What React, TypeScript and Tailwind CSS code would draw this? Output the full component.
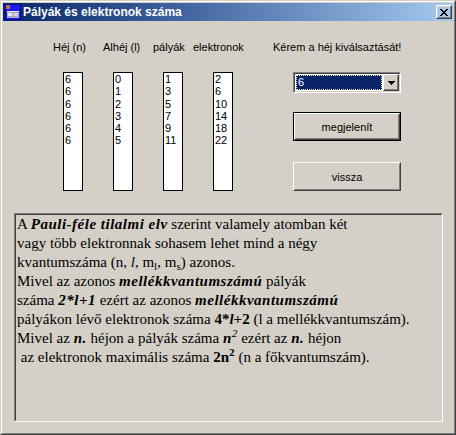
import React from 'react';

const lists: string[][] = [
  ['6', '6', '6', '6', '6', '6'],
  ['0', '1', '2', '3', '4', '5'],
  ['1', '3', '5', '7', '9', '11'],
  ['2', '6', '10', '14', '18', '22'],
];

const Bevel: React.FC<{ children: React.ReactNode; className?: string }> = ({ children, className }) => (
  <div className={`border border-t-white border-l-white border-r-[#404040] border-b-[#404040] ${className ?? ''}`}>
    <div className="h-full border border-t-[#d4d0c8] border-l-[#d4d0c8] border-r-[#808080] border-b-[#808080] flex items-center justify-center">
      {children}
    </div>
  </div>
);

// bold italic run, Windows renders these a little wider
const BI: React.FC<{ children: React.ReactNode }> = ({ children }) => (
  <b className="italic tracking-[0.5px]">{children}</b>
);

const TitleIcon = () => (
  <svg width="16" height="16" viewBox="0 0 16 16" shapeRendering="crispEdges">
    <rect x="0" y="0" width="16" height="16" fill="#0a0a9c" />
    <rect x="1" y="1" width="14" height="14" fill="#1c1cf0" />
    <rect x="1" y="1" width="4" height="4" fill="#c46a6a" />
    <rect x="2" y="7" width="12" height="7" fill="#a8a8b8" />
    <rect x="2" y="7" width="12" height="1" fill="#e8e8f0" />
    <rect x="3" y="9" width="4" height="3" fill="#ececf4" />
    <rect x="8" y="9" width="5" height="3" fill="#d0d0dc" />
  </svg>
);

const App: React.FC = () => {
  return (
    <div className="w-[456px] h-[435px] bg-[#d4d0c8] border border-t-[#d4d0c8] border-l-[#d4d0c8] border-r-[#404040] border-b-[#404040] font-['Liberation_Sans',Arial,sans-serif] text-black">
      <div className="h-full border border-t-white border-l-white border-r-[#808080] border-b-[#808080] p-px flex flex-col">
        {/* title bar */}
        <div className="h-[18px] flex items-center bg-linear-to-r from-[#0a246a] to-[#a6caf0] pl-[2px] pr-px">
          <TitleIcon />
          <span className="ml-[2px] text-white font-bold text-[12px] leading-[18px]">Pályák és elektronok száma</span>
          <div className="ml-auto w-[16px] h-[14px]">
            <Bevel className="h-full">
              <svg width="8" height="7" viewBox="0 0 8 7" shapeRendering="crispEdges">
                <path d="M0 0h2v1h-2zM6 0h2v1h-2zM1 1h2v1h-2zM5 1h2v1h-2zM2 2h4v1h-4zM3 3h2v1h-2zM2 4h4v1h-4zM1 5h2v1h-2zM5 5h2v1h-2zM0 6h2v1h-2zM6 6h2v1h-2z" fill="#000" />
              </svg>
            </Bevel>
          </div>
        </div>

        {/* client area */}
        <div className="flex-1 flex flex-col text-[11px]">
          <div className="flex mt-[20px]">
            <div className="w-[220px] ml-[50px]">
              <div className="flex h-[13px] leading-[13px]">
                <span className="w-[50px]">Héj (n)</span>
                <span className="w-[50px]">Alhéj (l)</span>
                <span className="w-[40px]">pályák</span>
                <span>elektronok</span>
              </div>
              <div className="flex gap-[30px] ml-[10px] mt-[18px]">
                {lists.map((col, i) => (
                  <div key={i} className="w-[20px] h-[119px] border border-black bg-white pl-px leading-[12.3px]">
                    {col.map((v, j) => (
                      <div key={j}>{v}</div>
                    ))}
                  </div>
                ))}
              </div>
            </div>
            <div>
              <div className="h-[13px] leading-[13px]">Kérem a héj kiválsaztását!</div>
              <div className="ml-[20px] mt-[18px] w-[108px] flex flex-col">
                {/* combo box */}
                <div className="h-[21px] border border-t-[#808080] border-l-[#808080] border-r-white border-b-white">
                  <div className="h-full border border-t-[#404040] border-l-[#404040] border-r-[#d4d0c8] border-b-[#d4d0c8] bg-white flex">
                    <div className="flex-1 p-px">
                      <div className="h-full bg-[#0a246a] border border-dotted border-[#f4eca0] text-white leading-[13px] pl-px">6</div>
                    </div>
                    <Bevel className="w-[16px] h-[17px] bg-[#d4d0c8]">
                      <svg width="7" height="4" viewBox="0 0 7 4" shapeRendering="crispEdges">
                        <path d="M0 0h7v1h-7zM1 1h5v1h-5zM2 2h3v1h-3zM3 3h1v1h-1z" fill="#000" />
                      </svg>
                    </Bevel>
                  </div>
                </div>
                <div className="mt-[19px] h-[29px] border border-black">
                  <Bevel className="h-full">
                    <span className="pt-[2px]">megjelenít</span>
                  </Bevel>
                </div>
                <Bevel className="mt-[21px] h-[29px]">
                  <span className="pt-[2px]">vissza</span>
                </Bevel>
              </div>
            </div>
          </div>

          {/* rich text box */}
          <div className="mt-[22px] ml-[11px] w-[429px] h-[209px] border border-t-[#808080] border-l-[#808080] border-r-white border-b-white">
            <div className="h-full border border-t-[#404040] border-l-[#404040] border-r-[#d4d0c8] border-b-[#d4d0c8] pl-px font-['Liberation_Serif','Times_New_Roman',serif] text-[15px] leading-[19px] whitespace-pre">
              <div>
                A <BI>Pauli-féle tilalmi elv</BI> szerint valamely atomban két
              </div>
              <div>vagy több elektronnak sohasem lehet mind a négy</div>
              <div>
                kvantumszáma (n, <i>l</i>, m<sub>l</sub>, m<sub>s</sub>) azonos.
              </div>
              <div>
                Mivel az azonos <BI>mellékkvantumszámú</BI> pályák
              </div>
              <div>
                száma <BI>2*l+1</BI> ezért az azonos <BI>mellékkvantumszámú</BI>
              </div>
              <div>
                pályákon lévő elektronok száma <b>4*<i>l</i>+2</b> (l a mellékkvantumszám).
              </div>
              <div>
                Mivel az <BI>n.</BI> héjon a pályák száma <BI>n</BI><sup><i>2</i></sup> ezért az <BI>n.</BI> héjon
              </div>
              <div>
                {' '}az elektronok maximális száma <b>2n<sup>2</sup></b> (n a főkvantumszám).
              </div>
            </div>
          </div>
        </div>
      </div>
    </div>
  );
};

export default App;
